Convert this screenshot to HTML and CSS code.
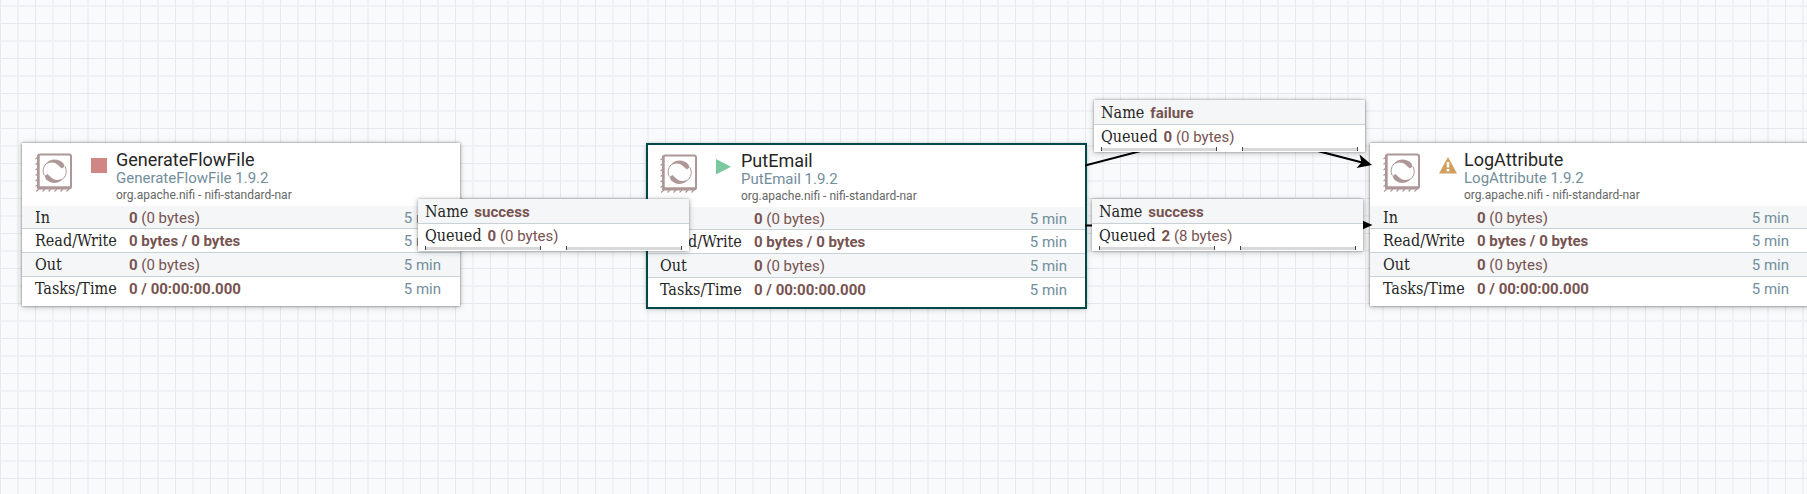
FILE: index.html
```
<!DOCTYPE html>
<html lang="en">
<head>
<meta charset="utf-8">
<title>Flow canvas</title>
<link rel="stylesheet" href="styles.css">
</head>
<body>
<svg class="defs" width="0" height="0" aria-hidden="true">
  <symbol id="processor" viewBox="0 0 38 39">
    <rect x="3" y="1.5" width="33" height="34" rx="2" fill="#fff" stroke="#ad9897" stroke-width="2"/>
    <path d="M3.4 2v32.6H36" fill="none" stroke="#ad9897" stroke-width="2.6"/>
    <path d="M3 4L.5 6M3 9.500L.5 11.500M3 15L.5 17M3 20.500L.5 22.500M3 26L.5 28M3 31.500L.5 33.500M4 36L1 38.500M10 36L7.500 38.500M16 36L13.500 38.500M22 36L19.500 38.500M28 36L25.500 38.500M34 36L31.500 38.500" fill="none" stroke="#ad9897" stroke-width="1.2"/>
    <path d="M9.200 22.500A11 11 0 0 1 11 10.800" fill="none" stroke="#ad9897" stroke-width="1"/>
    <path d="M30 13.500A11 11 0 0 1 28.500 25.500" fill="none" stroke="#ad9897" stroke-width="1"/>
    <path d="M10 12C14 5.500 23 4.800 28.300 10.200L29.600 13.400L26.800 15.600L24 13C20 8.500 14.500 8.500 10 12Z" fill="#ad9897"/>
    <path d="M29.200 24.500C25.200 31 16.200 31.700 10.900 26.300L9.600 23.100L12.400 20.900L15.200 23.500C19.200 28 24.700 28 29.200 24.500Z" fill="#ad9897"/>
  </symbol>
</svg>
<main class="canvas">
  <article class="processor generate">
    <header class="head">
      <svg class="type-icon"><use href="#processor"/></svg>
      <svg class="state" viewBox="0 0 20 18" role="img" aria-label="Stopped"><path d="M1 1h16v15H1z" fill="#d18686"/></svg>
      <div class="titles">
        <h2 class="name">GenerateFlowFile</h2>
        <p class="type">GenerateFlowFile 1.9.2</p>
        <p class="bundle">org.apache.nifi - nifi-standard-nar</p>
      </div>
    </header>
    <table class="stats">
      <tr><th scope="row">In</th><td><b>0</b> (0 bytes)</td><td class="window">5 min</td></tr>
      <tr><th scope="row">Read/Write</th><td><b>0 bytes / 0 bytes</b></td><td class="window">5 min</td></tr>
      <tr><th scope="row">Out</th><td><b>0</b> (0 bytes)</td><td class="window">5 min</td></tr>
      <tr><th scope="row">Tasks/Time</th><td><b>0 / 00:00:00.000</b></td><td class="window">5 min</td></tr>
    </table>
  </article>

  <article class="processor email selected">
    <header class="head">
      <svg class="type-icon"><use href="#processor"/></svg>
      <svg class="state" viewBox="0 0 20 18" role="img" aria-label="Running"><path d="M1 1v15.500l15-7.700z" fill="#7dc7a0"/></svg>
      <div class="titles">
        <h2 class="name">PutEmail</h2>
        <p class="type">PutEmail 1.9.2</p>
        <p class="bundle">org.apache.nifi - nifi-standard-nar</p>
      </div>
    </header>
    <table class="stats">
      <tr><th scope="row">In</th><td><b>0</b> (0 bytes)</td><td class="window">5 min</td></tr>
      <tr><th scope="row">Read/Write</th><td><b>0 bytes / 0 bytes</b></td><td class="window">5 min</td></tr>
      <tr><th scope="row">Out</th><td><b>0</b> (0 bytes)</td><td class="window">5 min</td></tr>
      <tr><th scope="row">Tasks/Time</th><td><b>0 / 00:00:00.000</b></td><td class="window">5 min</td></tr>
    </table>
  </article>

  <article class="processor log">
    <header class="head">
      <svg class="type-icon"><use href="#processor"/></svg>
      <svg class="state" viewBox="0 0 20 18" role="img" aria-label="Invalid"><path d="M10 0l9 16.500H1z" fill="#cf9f5d"/><path d="M8.700 5h2.600v5.500H8.700zM8.700 12h2.600v2.500H8.700z" fill="#fff"/></svg>
      <div class="titles">
        <h2 class="name">LogAttribute</h2>
        <p class="type">LogAttribute 1.9.2</p>
        <p class="bundle">org.apache.nifi - nifi-standard-nar</p>
      </div>
    </header>
    <table class="stats">
      <tr><th scope="row">In</th><td><b>0</b> (0 bytes)</td><td class="window">5 min</td></tr>
      <tr><th scope="row">Read/Write</th><td><b>0 bytes / 0 bytes</b></td><td class="window">5 min</td></tr>
      <tr><th scope="row">Out</th><td><b>0</b> (0 bytes)</td><td class="window">5 min</td></tr>
      <tr><th scope="row">Tasks/Time</th><td><b>0 / 00:00:00.000</b></td><td class="window">5 min</td></tr>
    </table>
  </article>

  <svg class="wires" width="288" height="110" viewBox="1085 130 288 110" aria-hidden="true">
    <path d="M1085 165.500L1229 128L1366 163.500M1085 225.500H1366" fill="none" stroke="#000" stroke-width="2"/>
    <path d="M1372 165L1356.500 168L1361.500 162.500L1359.500 154.500z"/>
    <path d="M1372.500 225L1360 219.500V230.500z"/>
  </svg>

  <dl class="queue from-generate">
    <div class="line"><dt>Name</dt><dd><b>success</b></dd></div>
    <div class="line"><dt>Queued</dt><dd><b>0</b> (0 bytes)</dd></div>
    <div class="bars"><span class="bar"></span><span class="bar"></span></div>
  </dl>
  <dl class="queue failure">
    <div class="line"><dt>Name</dt><dd><b>failure</b></dd></div>
    <div class="line"><dt>Queued</dt><dd><b>0</b> (0 bytes)</dd></div>
    <div class="bars"><span class="bar"></span><span class="bar"></span></div>
  </dl>
  <dl class="queue from-email">
    <div class="line"><dt>Name</dt><dd><b>success</b></dd></div>
    <div class="line"><dt>Queued</dt><dd><b>2</b> (8 bytes)</dd></div>
    <div class="bars"><span class="bar"></span><span class="bar"></span></div>
  </dl>
</main>
</body>
</html>
```
FILE: styles.css
```
* { box-sizing: border-box; }

body, h2, p, dl, dd { margin: 0; }

body {
  font-family: Roboto, sans-serif;
  font-size: 15px;
  color: #775351;
}

.defs { position: absolute; }

.canvas {
  position: relative;
  min-height: 100vh;
  overflow: hidden;
  background-color: #f9fafc;
  background-image:
    linear-gradient(to right, #e5e9eb 1px, transparent 1px),
    linear-gradient(to bottom, #e5e9eb 1px, transparent 1px),
    linear-gradient(to right, #eff2f4 2px, transparent 2px),
    linear-gradient(to bottom, #eff2f4 2px, transparent 2px);
  background-size: 35px 35px;
  background-position: 0 0, 0 23px, 17px 0, 0 5px;
}

/* Processors */
.processor {
  position: absolute;
  top: 143px;
  width: 438px;
  padding-bottom: 5px;
  background: #fff;
  box-shadow: 0 0 2px rgba(0, 0, 0, .5), 0 1px 6px rgba(0, 0, 0, .25);
}

.generate { left: 22px; }
.email { left: 647px; }
.log { left: 1370px; }

.selected {
  top: 144px;
  width: 439px;
  padding-bottom: 6px;
  outline: 2px solid #004849;
  outline-offset: -1px;
}

.head {
  display: flex;
  height: 63px;
  padding-left: 13px;
}

.type-icon {
  width: 38px;
  height: 39px;
  margin-top: 10px;
}

.state {
  width: 20px;
  height: 18px;
  margin: 14px 6px 0 17px;
}

.titles { padding-top: 7px; }

.name {
  font-size: 18px;
  line-height: 20px;
  font-weight: 400;
  color: #262626;
}

.type {
  font-size: 15px;
  line-height: 17px;
  color: #728e9b;
}

.bundle {
  font-size: 12px;
  line-height: 17px;
  color: #666;
}

.stats {
  width: 100%;
  border-collapse: separate;
  border-spacing: 0;
  table-layout: fixed;
}

.stats tr:nth-child(odd) { background: #f4f6f7; }

.stats th, .stats td {
  height: 24px;
  padding: 0;
  line-height: 22px;
  text-align: left;
  border-bottom: 1px solid #c7d2d7;
}

.stats tr:first-child > * {
  height: 23px;
  padding-top: 2px;
  line-height: 20px;
}
.stats tr:last-child > * { border-bottom: 0; }

.stats th {
  width: 103px;
  padding-left: 13px;
}

.stats td:nth-child(2) { padding-left: 4px; }

.stats .window {
  width: 74px;
  padding-right: 19px;
  text-align: right;
  color: #728e9b;
}

.stats th, .queue dt {
  font-family: "DejaVu Serif Condensed", "DejaVu Serif", serif;
  font-size: 16px;
  font-weight: 400;
  color: #262626;
}

b { font-weight: 700; }

/* Connections */
.wires {
  position: absolute;
  left: 1085px;
  top: 130px;
}

.queue {
  position: absolute;
  width: 271px;
  height: 52px;
  background: #fff;
  box-shadow: 0 0 2px rgba(0, 0, 0, .35), 0 1px 6px rgba(0, 0, 0, .25);
}

.from-generate { left: 418px; top: 199px; }
.failure { left: 1094px; top: 100px; }
.from-email { left: 1092px; top: 199px; }

.line {
  display: flex;
  gap: 6px;
  padding-left: 7px;
  line-height: 24px;
  height: 22px;
}

.line:first-child {
  height: 25px;
  line-height: 26px;
  background: #f4f6f7;
  border-bottom: 1px solid #c7d2d7;
}

.bars {
  display: flex;
  gap: 25px;
  padding: 0 7px;
}

.bar {
  flex: 1;
  height: 4px;
  background: linear-gradient(#d8d8d8, #d8d8d8) center / 100% 3px no-repeat;
  border: solid #444;
  border-width: 0 1px;
}
```
